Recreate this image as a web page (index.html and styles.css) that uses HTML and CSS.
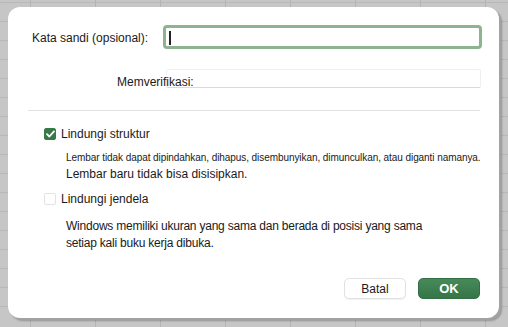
FILE: index.html
```html
<!DOCTYPE html>
<html lang="id">

<head>
    <meta charset="UTF-8">
    <meta name="viewport" content="width=device-width, initial-scale=1.0">
    <title>Lindungi Lembar</title>
    <link rel="stylesheet" href="styles.css">
</head>

<body>
    <div class="sheet">
        <div class="dialog">
            <div class="field-row">
                <label class="field-label" for="pass">Kata sandi (opsional):</label>
                <div class="pass-input" id="pass"><span class="caret"></span></div>
            </div>
            <div class="field-row verify-row">
                <label class="verify-label">Memverifikasi:</label>
                <div class="verify-input"></div>
            </div>

            <hr class="divider">

            <div class="option">
                <span class="check checked">
                    <svg width="9" height="8" viewBox="0 0 9 8">
                        <path d="M1 4.2 L3.4 6.5 L8 1.4" fill="none" stroke="#fff" stroke-width="1.8"
                            stroke-linecap="round" stroke-linejoin="round" />
                    </svg>
                </span>
                <span class="option-label">Lindungi struktur</span>
            </div>
            <p class="note-small">Lembar tidak dapat dipindahkan, dihapus, disembunyikan, dimunculkan, atau diganti namanya.</p>
            <p class="note">Lembar baru tidak bisa disisipkan.</p>

            <div class="option option-two">
                <span class="check"></span>
                <span class="option-label">Lindungi jendela</span>
            </div>
            <p class="note windows-note">Windows memiliki ukuran yang sama dan berada di posisi yang sama<br>setiap kali buku kerja dibuka.</p>

            <div class="actions">
                <button class="btn btn-cancel">Batal</button>
                <button class="btn btn-ok">OK</button>
            </div>
        </div>
    </div>
</body>

</html>
```

FILE: styles.css
```css
* {
    margin: 0;
    padding: 0;
    box-sizing: border-box;
}

body {
    width: 508px;
    height: 327px;
    overflow: hidden;
    background-color: #c4c4c4;
    font-family: "Liberation Sans", Arial, sans-serif;
    color: #1a1a1a;
}

.sheet {
    width: 508px;
    height: 327px;
    padding: 7px 0 0 8px;
    background-color: #c6c6c6;
    background-image:
        repeating-linear-gradient(90deg, transparent 0 30px, #b3b3b3 30px 31px, transparent 31px 65px),
        repeating-linear-gradient(0deg, transparent 0 18px, #b8b8b8 18px 19px);
    background-position: 0 0, 0 -2px;
}

.dialog {
    width: 491px;
    height: 311px;
    background-color: #fff;
    border-radius: 12px;
    box-shadow: 2px 2px 0 #a2a2a2, 3px 3px 2px rgba(0, 0, 0, 0.25);
    padding: 18px 17px 0 24px;
    display: flex;
    flex-direction: column;
}

.field-row {
    display: flex;
    align-items: center;
}

.field-label {
    width: 131px;
    flex-shrink: 0;
    font-size: 12px;
    padding-top: 2px;
}

.pass-input {
    width: 319px;
    flex-shrink: 0;
    height: 24px;
    border: 3px solid #8db392;
    border-radius: 4px;
    padding: 3px 0 0 3px;
}

.caret {
    display: block;
    width: 2px;
    height: 14px;
    background-color: #222;
}

.verify-row {
    margin-top: 19px;
}

.verify-label {
    margin-left: 85px;
    font-size: 12px;
    padding-top: 7px;
    white-space: nowrap;
    position: relative;
    z-index: 1;
    flex-shrink: 0;
}

.verify-input {
    width: 315px;
    flex-shrink: 0;
    height: 19px;
    margin-left: -28px;
    border: 1px solid #efefef;
    border-bottom-color: #dadada;
    border-radius: 2px;
}

.divider {
    border: none;
    border-top: 1px solid #e2e2e2;
    margin: 21px 0 0 -4px;
    width: 452px;
}

.option {
    display: flex;
    align-items: center;
    margin-top: 16px;
    margin-left: 12px;
}

.check {
    width: 12px;
    height: 12px;
    border: 1px solid #e3e3e3;
    border-radius: 2px;
    display: flex;
    align-items: center;
    justify-content: center;
}

.check.checked {
    background-color: #367a47;
    border-color: #367a47;
}

.option-label {
    font-size: 12px;
    margin-left: 5px;
}

.note-small {
    font-size: 10px;
    letter-spacing: -0.07px;
    margin: 11px 0 0 34px;
    white-space: nowrap;
}

.note {
    font-size: 12px;
    margin: 4px 0 0 34px;
}

.option-two {
    margin-top: 11px;
}

.windows-note {
    margin-top: 12px;
    line-height: 17px;
    letter-spacing: -0.22px;
}

.actions {
    display: flex;
    justify-content: flex-end;
    gap: 12px;
    margin-top: auto;
    margin-right: 2px;
    margin-bottom: 19px;
}

.btn {
    width: 62px;
    height: 21px;
    border-radius: 5px;
    font-family: "Liberation Sans", Arial, sans-serif;
    font-size: 12px;
}

.btn-cancel {
    background-color: #fff;
    border: 1px solid #e2e2e2;
    box-shadow: 0 1px 1px rgba(0, 0, 0, 0.06);
    color: #1a1a1a;
}

.btn-ok {
    background: linear-gradient(#468a5a, #357548);
    border: 1px solid #346f46;
    color: #fff;
    font-weight: bold;
    font-size: 13px;
}
```
